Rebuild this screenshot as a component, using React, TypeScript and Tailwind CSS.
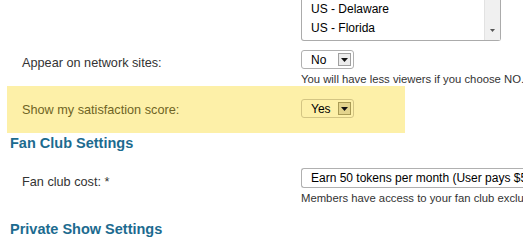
const LABEL = "font-['Liberation_Sans',Arial,sans-serif] text-[12.7px] leading-[18px] w-[279px] shrink-0";
const HELP = "font-['Liberation_Sans',Arial,sans-serif] text-[11.3px] leading-[14px] text-[#333] whitespace-nowrap";
const HEAD = "font-['Liberation_Sans',Arial,sans-serif] text-[14.5px] leading-[20px] font-bold text-[#1c6b8f] pl-[10px]";
const CTRL = "font-['Liberation_Sans',Arial,sans-serif] text-[12px] text-black";

function Caret() {
  return (
    <svg width="7" height="4" viewBox="0 0 7 4">
      <path d="M0 0h7L3.5 4z" fill="#111" />
    </svg>
  );
}

function MiniSelect({ value, yellow }: { value: string; yellow?: boolean }) {
  return (
    <div
      className={`${CTRL} flex items-center justify-between w-[53px] h-[19px] rounded-[3px] border pl-[9px] pr-[2px] ${
        yellow ? "border-[#d3c583] bg-[#fdf0a8]" : "border-[#b0b0b0] bg-white"
      }`}
    >
      <span>{value}</span>
      <span
        className={`flex items-center justify-center w-[13px] h-[13px] border ${
          yellow ? "border-[#a99b55] bg-[#e3d48d]" : "border-[#a0a0a0] bg-[#ececec]"
        }`}
      >
        <Caret />
      </span>
    </div>
  );
}

export default function App() {
  return (
    <div className="w-[523px] h-[245px] overflow-hidden bg-white relative">
      {/* state list (scrolled) */}
      <div className="ml-[301px] w-[200px] h-[41px] border border-t-0 border-[#ababab] rounded-b-[3px] flex bg-white">
        <div className={`${CTRL} flex-1 pl-[9px]`}>
          <div className="h-[19px] leading-[19px]">US - Delaware</div>
          <div className="h-[19px] leading-[19px]">US - Florida</div>
        </div>
        <div className="w-[16px] bg-[#f0f0f0] border-l border-[#e2e2e2] flex flex-col justify-end items-center pb-[8px]">
          <svg width="5" height="3" viewBox="0 0 5 3">
            <path d="M0 0h5L2.5 3z" fill="#555" />
          </svg>
        </div>
      </div>

      {/* appear on network */}
      <div className="flex items-start mt-[9px] pl-[22px]">
        <div className={`${LABEL} pt-[4px] text-[#333]`}>Appear on network sites:</div>
        <div className="min-w-0">
          <MiniSelect value="No" />
          <div className={`${HELP} mt-[3px]`}>You will have less viewers if you choose NO.</div>
        </div>
      </div>

      {/* highlighted row */}
      <div className="ml-[7px] w-[398px] h-[47px] bg-[#fdf0a8] flex items-start pl-[15px] pt-[13px]">
        <div className={`${LABEL} pt-[2px] text-[#6f6424]`}>Show my satisfaction score:</div>
        <MiniSelect value="Yes" yellow />
      </div>

      <div className={HEAD}>Fan Club Settings</div>

      <div className="flex items-start mt-[15px] pl-[22px]">
        <div className={`${LABEL} pt-[5px] text-[#333]`}>Fan club cost: *</div>
        <div className="flex-1 min-w-0 overflow-hidden">
          <div className={`${CTRL} h-[20px] leading-[18px] border border-r-0 border-[#b0b0b0] rounded-l-[3px] pl-[9px] whitespace-nowrap overflow-hidden`}>
            Earn 50 tokens per month (User pays $5.00)
          </div>
          <div className={`${HELP} mt-[3px]`}>Members have access to your fan club exclusive content.</div>
        </div>
      </div>

      <div className={`${HEAD} mt-[14px]`}>Private Show Settings</div>
    </div>
  );
}
